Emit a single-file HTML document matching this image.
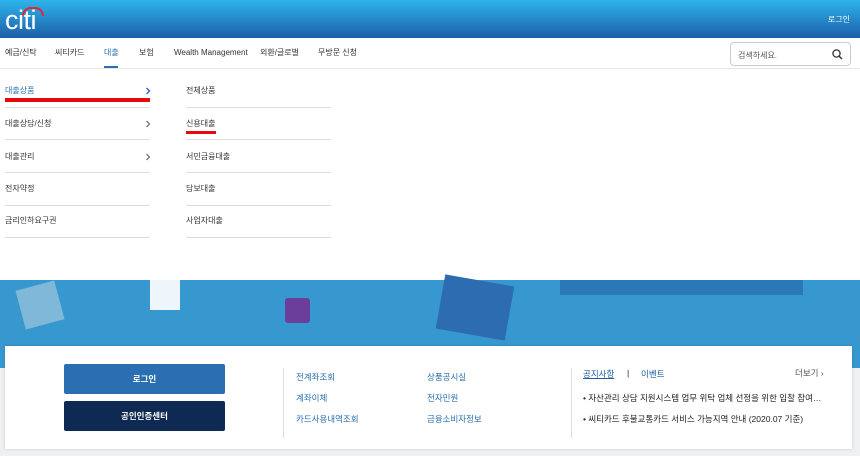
<!DOCTYPE html>
<html><head><meta charset="utf-8"><style>
*{margin:0;padding:0;box-sizing:border-box}
body{width:860px;height:456px;overflow:hidden;position:relative;background:#eef0f2;font-family:"Liberation Sans","Noto Sans CJK KR",sans-serif;font-size:8px;color:#333}
.hdr{position:absolute;left:0;top:0;width:860px;height:38px;background:linear-gradient(#2fb4ec,#1b5fa8)}
.logo{position:absolute;left:5px;top:6px;color:#fff;font-size:27px;letter-spacing:-0.5px;line-height:28px}
.arc{position:absolute;left:22px;top:7px;width:22px;height:9px;border:2px solid #e3262b;border-bottom:none;border-radius:11px 11px 0 0}
.hl{position:absolute;right:10px;top:14px;color:#fff;font-size:8px}
.nav{position:absolute;top:38px;left:0;width:860px;height:31px;background:#fff;border-bottom:1px solid #e6e6e6}
.nav span{position:absolute;top:9px;font-size:8px;line-height:12px;color:#333}
.srch{position:absolute;left:730px;top:42px;width:121px;height:24px;border:1px solid #ccc;border-radius:4px;font-size:8px;color:#555;padding:7px 0 0 7px}
.menu{position:absolute;top:69px;left:0;width:860px;height:211px;background:#fff}
.it{position:absolute;font-size:8px;line-height:12px;color:#333}
.ar{position:absolute;left:145px}
.ln{position:absolute;height:1px;background:#ddd}
.banner{position:absolute;top:280px;left:0;width:860px;height:88px;background:#3798cf}
.panel{position:absolute;left:5px;top:346px;width:847px;height:103px;background:#fff;box-shadow:0 0 3px rgba(0,0,0,.15)}
.btn{position:absolute;left:59px;width:161px;height:30px;border-radius:2px;color:#fff;font-size:8.5px;font-weight:bold;text-align:center;line-height:30px}
.lk{position:absolute;font-size:8.5px;color:#2a6fb0}
.nt{position:absolute;font-size:8.5px;color:#222}
</style></head><body>
<div class="hdr"><div class="arc"></div><div class="logo">citi</div><div class="hl">로그인</div></div>
<div class="nav">
<span style="left:5px">예금/신탁</span><span style="left:55px">씨티카드</span>
<span style="left:104px;color:#2a6fb0">대출</span>
<div style="position:absolute;left:104px;top:28px;width:14px;height:2px;background:#2a6fb0"></div>
<span style="left:139px">보험</span><span style="left:174px">Wealth Management</span>
<span style="left:260px">외환/글로벌</span><span style="left:318px">무방문 신청</span>
</div>
<div class="srch">검색하세요.
<svg style="position:absolute;right:7px;top:6px" width="11" height="11" viewBox="0 0 11 11"><circle cx="4.5" cy="4.5" r="3.6" fill="none" stroke="#333" stroke-width="1.3"/><path d="M7.2 7.2L10 10" stroke="#333" stroke-width="1.4"/></svg></div>
<div class="menu">
<div class="it" style="left:5px;top:16px;color:#2a6fb0">대출상품</div>
<svg class="ar" style="top:18px" width="6" height="8" viewBox="0 0 6 8"><path d="M1.5 1L4.5 4L1.5 7" fill="none" stroke="#2a6fb0" stroke-width="1.4"/></svg>
<div style="position:absolute;left:5px;top:29px;width:145px;height:4px;background:#e8090f"></div>
<div class="ln" style="left:5px;top:38px;width:145px"></div>
<div class="it" style="left:5px;top:49px">대출상담/신청</div>
<svg class="ar" style="top:51px" width="6" height="8" viewBox="0 0 6 8"><path d="M1.5 1L4.5 4L1.5 7" fill="none" stroke="#555" stroke-width="1"/></svg>
<div class="ln" style="left:5px;top:70px;width:145px"></div>
<div class="it" style="left:5px;top:82px">대출관리</div>
<svg class="ar" style="top:84px" width="6" height="8" viewBox="0 0 6 8"><path d="M1.5 1L4.5 4L1.5 7" fill="none" stroke="#555" stroke-width="1"/></svg>
<div class="ln" style="left:5px;top:103px;width:145px"></div>
<div class="it" style="left:5px;top:114px">전자약정</div>
<div class="ln" style="left:5px;top:136px;width:145px"></div>
<div class="it" style="left:5px;top:146px">금리인하요구권</div>
<div class="ln" style="left:5px;top:168px;width:145px"></div>
<div class="it" style="left:186px;top:16px">전체상품</div>
<div class="ln" style="left:186px;top:38px;width:145px"></div>
<div class="it" style="left:186px;top:49px">신용대출</div>
<div style="position:absolute;left:186px;top:62px;width:30px;height:3px;background:#e8090f"></div>
<div class="ln" style="left:186px;top:70px;width:145px"></div>
<div class="it" style="left:186px;top:82px">서민금융대출</div>
<div class="ln" style="left:186px;top:103px;width:145px"></div>
<div class="it" style="left:186px;top:114px">담보대출</div>
<div class="ln" style="left:186px;top:136px;width:145px"></div>
<div class="it" style="left:186px;top:146px">사업자대출</div>
<div class="ln" style="left:186px;top:168px;width:145px"></div>
</div>
<div class="banner">
<div style="position:absolute;left:560px;top:0;width:243px;height:15px;background:#2a78b6"></div>
<div style="position:absolute;left:20px;top:5px;width:40px;height:40px;background:#7fb8d8;transform:rotate(-15deg)"></div>
<div style="position:absolute;left:150px;top:0;width:30px;height:30px;background:#eef6fb"></div>
<div style="position:absolute;left:285px;top:18px;width:25px;height:25px;background:#6a3e9a;border-radius:3px"></div>
<div style="position:absolute;left:440px;top:0;width:70px;height:55px;background:#2d6cb0;transform:rotate(10deg)"></div>
</div>
<div class="panel">
<div class="btn" style="top:18px;background:#2b6fb2">로그인</div>
<div class="btn" style="top:55px;background:#0f2a52">공인인증센터</div>
<div style="position:absolute;left:278px;top:22px;width:1px;height:70px;background:#ddd"></div>
<div style="position:absolute;left:566px;top:22px;width:1px;height:70px;background:#ddd"></div>
<div class="lk" style="left:291px;top:25px">전계좌조회</div><div class="lk" style="left:291px;top:46px">계좌이체</div><div class="lk" style="left:291px;top:67px">카드사용내역조회</div>
<div class="lk" style="left:422px;top:25px">상품공시실</div><div class="lk" style="left:422px;top:46px">전자민원</div><div class="lk" style="left:422px;top:67px">금융소비자정보</div>
<div class="lk" style="left:578px;top:22px;text-decoration:underline;color:#1d5ea3">공지사항</div>
<div class="nt" style="left:622px;top:22px">|</div>
<div class="lk" style="left:636px;top:22px;color:#1d5ea3">이벤트</div>
<div class="nt" style="left:790px;top:21px;color:#555">더보기 ›</div>
<div class="nt" style="left:578px;top:46px">• 자산관리 상담 지원시스템 업무 위탁 업체 선정을 위한 입찰 참여…</div>
<div class="nt" style="left:578px;top:67px">• 씨티카드 후불교통카드 서비스 가능지역 안내 (2020.07 기준)</div>
</div>
</body></html>
